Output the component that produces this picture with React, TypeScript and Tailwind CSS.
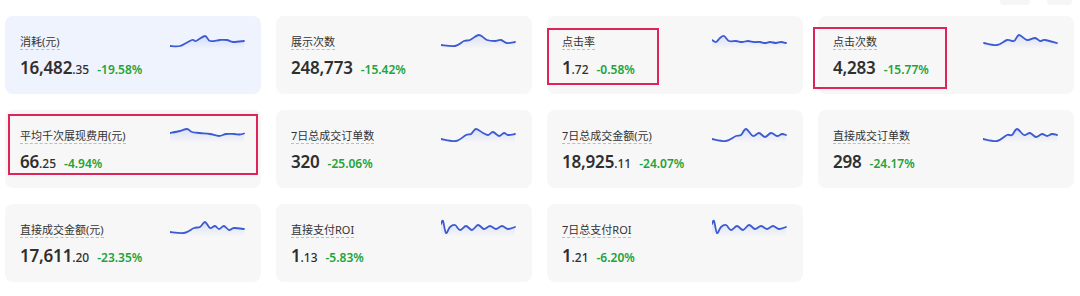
import React from "react";

type Pt = [number, number];

function smoothPath(pts: Pt[]): string {
  let d = `M${pts[0][0]},${pts[0][1]}`;
  for (let i = 0; i < pts.length - 1; i++) {
    const p0 = pts[i - 1] || pts[i];
    const p1 = pts[i];
    const p2 = pts[i + 1];
    const p3 = pts[i + 2] || p2;
    const c1x = p1[0] + (p2[0] - p0[0]) / 6;
    const c1y = p1[1] + (p2[1] - p0[1]) / 6;
    const c2x = p2[0] - (p3[0] - p1[0]) / 6;
    const c2y = p2[1] - (p3[1] - p1[1]) / 6;
    d += ` C${c1x.toFixed(2)},${c1y.toFixed(2)} ${c2x.toFixed(2)},${c2y.toFixed(2)} ${p2[0]},${p2[1]}`;
  }
  return d;
}

function Spark({ pts, id }: { pts: Pt[]; id: string }) {
  const line = smoothPath(pts);
  const last = pts[pts.length - 1];
  const area = `${line} L${last[0]},18 L${pts[0][0]},18 Z`;
  return (
    <svg width="76" height="18" viewBox="0 0 76 18" className="shrink-0 -mt-[3px]">
      <defs>
        <linearGradient id={id} x1="0" y1="0" x2="0" y2="1">
          <stop offset="0%" stopColor="#4a68d8" stopOpacity="0.16" />
          <stop offset="100%" stopColor="#4a68d8" stopOpacity="0" />
        </linearGradient>
      </defs>
      <path d={area} fill={`url(#${id})`} />
      <path d={line} fill="none" stroke="#3b5bd2" strokeWidth="1.8" strokeLinecap="round" strokeLinejoin="round" />
    </svg>
  );
}

type Card = {
  label: string;
  int: string;
  dec?: string;
  pct: string;
  pts: Pt[];
  active?: boolean;
  box?: string;
};

const roi: Pt[] = [
  [0, 5], [2, 2], [5, 14], [9, 8], [14, 6], [19, 11], [25, 7], [31, 11], [37, 6], [43, 10], [49, 7], [55, 10], [61, 7], [67, 10], [74, 8],
];

const cards: Card[] = [
  {
    label: "消耗(元)", int: "16,482", dec: ".35", pct: "-19.58%", active: true,
    pts: [[0, 15], [10, 15], [22, 9], [26, 10], [35, 5], [40, 10], [50, 9], [57, 9], [63, 11], [74, 10]],
  },
  {
    label: "展示次数", int: "248,773", pct: "-15.42%",
    pts: [[0, 14], [14, 15], [23, 10], [29, 9], [38, 4], [46, 9], [54, 10], [60, 9], [66, 12], [74, 11]],
  },
  {
    label: "点击率", int: "1", dec: ".72", pct: "-0.58%",
    box: "left-0 top-[12px] w-[112px] h-[57px]",
    pts: [[0, 9], [4, 11], [8, 7], [12, 5], [17, 10], [24, 10], [30, 11], [36, 10], [42, 11], [48, 11], [53, 12], [58, 11], [64, 12], [69, 11], [74, 12]],
  },
  {
    label: "点击次数", int: "4,283", pct: "-15.77%",
    box: "-left-[5px] top-[11px] w-[134px] h-[62px]",
    pts: [[1, 12], [14, 14], [24, 9], [31, 10], [36, 4], [44, 9], [52, 7], [57, 10], [62, 9], [74, 12]],
  },
  {
    label: "平均千次展现费用(元)", int: "66", dec: ".25", pct: "-4.94%",
    box: "left-[3px] top-[4px] w-[250px] h-[61px]",
    pts: [[0, 8], [10, 6], [17, 4], [22, 7], [30, 8], [40, 9], [49, 11], [56, 9], [64, 9], [70, 9.5], [74, 8.5]],
  },
  {
    label: "7日总成交订单数", int: "320", pct: "-25.06%",
    pts: [[0, 14], [15, 16], [25, 10], [30, 9], [35, 4], [42, 8], [47, 10], [52, 7], [58, 11], [63, 8], [67, 10], [74, 9]],
  },
  {
    label: "7日总成交金额(元)", int: "18,925", dec: ".11", pct: "-24.07%",
    pts: [[0, 14], [14, 16], [24, 11], [29, 10], [34, 4], [41, 11], [47, 8], [53, 12], [59, 8], [65, 11], [70, 9], [74, 10]],
  },
  {
    label: "直接成交订单数", int: "298", pct: "-24.17%",
    pts: [[0, 14], [14, 16], [24, 10], [29, 10], [34, 4], [41, 10], [47, 8], [53, 12], [59, 9], [64, 11], [69, 9], [74, 10]],
  },
  {
    label: "直接成交金额(元)", int: "17,611", dec: ".20", pct: "-23.35%",
    pts: [[0, 13], [14, 14], [24, 9], [30, 8], [35, 3], [40, 9], [45, 7], [49, 10], [54, 7], [59, 11], [64, 9], [74, 10]],
  },
  { label: "直接支付ROI", int: "1", dec: ".13", pct: "-5.83%", pts: roi },
  { label: "7日总支付ROI", int: "1", dec: ".21", pct: "-6.20%", pts: roi },
];

function MetricCard({ c, i }: { c: Card; i: number }) {
  return (
    <div
      className={`relative h-[78px] rounded-lg px-[15px] pt-[18px] ${
        c.active ? "bg-[#eff3fd]" : "bg-[#f7f7f8]"
      }`}
    >
      <div className="flex items-start justify-between">
        <span className="border-b border-dashed border-[#bdbdbd] text-[11px] leading-[15px] text-[#333333]">
          {c.label}
        </span>
        <Spark pts={c.pts} id={`g${i}`} />
      </div>
      <div className="mt-[8px] flex items-baseline leading-[20px]">
        <span className="text-[17px] font-semibold tracking-[-0.2px] text-[#2f2f2f]">{c.int}</span>
        {c.dec && <span className="text-[12px] font-medium text-[#2f2f2f]">{c.dec}</span>}
        <span className="ml-2 text-[12px] font-semibold text-[#22a33a]">{c.pct}</span>
      </div>
      {c.box && (
        <div className={`pointer-events-none absolute border-2 border-[#e0245a] ${c.box}`} />
      )}
    </div>
  );
}

export default function App() {
  return (
    <div
      className="h-[296px] w-[1080px] overflow-hidden bg-white"
      style={{ fontFamily: '"Noto Sans", "Noto Sans CJK SC", sans-serif' }}
    >
      <div className="flex justify-end gap-[17px] pr-[8px]">
        <div className="h-[5px] w-[30px] rounded-b bg-[#f6f6f6]" />
        <div className="h-[5px] w-[25px] rounded-b bg-[#f6f6f6]" />
      </div>
      <div className="mt-[11px] grid grid-cols-[repeat(4,256px)] gap-x-[15px] gap-y-[16px] pl-[5px]">
        {cards.map((c, i) => (
          <MetricCard key={i} c={c} i={i} />
        ))}
      </div>
    </div>
  );
}
